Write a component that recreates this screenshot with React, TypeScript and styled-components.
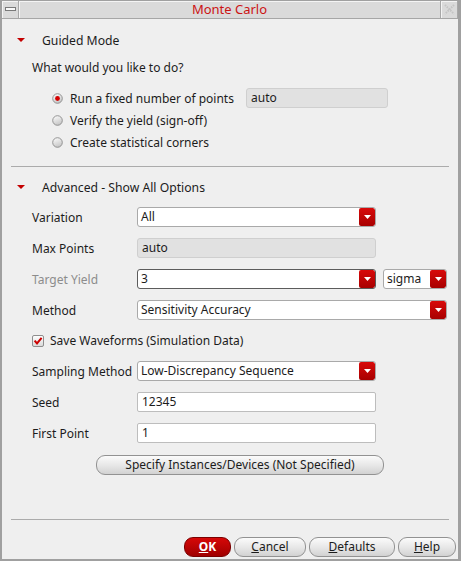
import React from "react";
import styled, { createGlobalStyle } from "styled-components";

const GlobalStyle = createGlobalStyle`
  html, body { margin: 0; padding: 0; }
  body {
    background: #efefef;
    font-family: "Noto Sans", "Open Sans", "DejaVu Sans", sans-serif;
    font-size: 12px;
    color: #1c1c1c;
  }
  * { box-sizing: border-box; }
`;

const Window = styled.div`
  width: 461px;
  height: 561px;
  display: flex;
  flex-direction: column;
  background: #efefef;
  border-style: solid;
  border-color: #a0a0a0;
  border-width: 1px 3px 2px 2px;
`;

const TitleBar = styled.div`
  height: 18px;
  display: flex;
  background: #dadada;
  border-bottom: 1px solid #a6a6a6;
`;

const TitleButton = styled.div`
  width: 17px;
  display: flex;
  align-items: center;
  justify-content: center;
  border-right: 1px solid #a8a8a8;
  box-shadow: inset 1px 1px 0 #f4f4f4;
`;

const TitleText = styled.div`
  flex: 1;
  text-align: center;
  color: #cc1414;
  font-size: 13px;
  line-height: 17px;
  border-right: 1px solid #a8a8a8;
  box-shadow: inset 1px 1px 0 #f4f4f4;
`;

const Body = styled.div`
  flex: 1;
  display: flex;
  flex-direction: column;
`;

const SectionHeader = styled.div<{ $top: number }>`
  display: flex;
  align-items: center;
  height: 20px;
  margin-top: ${(p) => p.$top}px;
  padding-left: 15px;
  font-size: 12.2px;
  svg { margin-right: 17px; }
`;

const Prompt = styled.div`
  margin-top: 8px;
  padding-left: 30px;
  height: 20px;
  line-height: 20px;
`;

const RadioGroup = styled.div`
  margin-top: 9px;
  padding-left: 50px;
  display: grid;
  grid-template-columns: 194px 142px;
  grid-auto-rows: 22px;
  align-items: center;
`;

const RadioOption = styled.div`
  grid-column: 1;
  display: flex;
  align-items: center;
  gap: 7px;
`;

const ReadonlyField = styled.div<{ $width: number }>`
  width: ${(p) => p.$width}px;
  height: 20px;
  line-height: 18px;
  padding-left: 4px;
  background: #e1e1e1;
  border: 1px solid #cfcfcf;
  border-radius: 3px;
`;

const Separator = styled.div<{ $top: number }>`
  height: 1px;
  margin: ${(p) => p.$top}px 9px 0 9px;
  background: #ababab;
`;

const Form = styled.div`
  margin-top: 10px;
  padding: 0 10px 0 30px;
  display: flex;
  flex-direction: column;
  gap: 11px;
`;

const FieldRow = styled.div`
  display: flex;
  align-items: center;
  height: 20px;
`;

const Label = styled.div<{ $disabled?: boolean }>`
  width: 105px;
  color: ${(p) => (p.$disabled ? "#8c8c8c" : "#1c1c1c")};
`;

const Combo = styled.div<{ $width: number; $focused?: boolean; $gap?: number }>`
  width: ${(p) => p.$width}px;
  height: 20px;
  margin-left: ${(p) => p.$gap ?? 0}px;
  display: flex;
  background: #fff;
  border: 1px solid ${(p) => (p.$focused ? "#5c5c5c" : "#a9a9a9")};
  border-radius: 3px;
  overflow: hidden;
`;

const ComboText = styled.div`
  flex: 1;
  padding-left: 3px;
  line-height: 18px;
`;

const ComboArrow = styled.div`
  width: 16px;
  display: flex;
  align-items: center;
  justify-content: center;
  border-radius: 2px;
  background: linear-gradient(#d80a0a, #a80000);
`;

const TextField = styled.div<{ $width: number }>`
  width: ${(p) => p.$width}px;
  height: 20px;
  line-height: 18px;
  padding-left: 4px;
  background: #fff;
  border: 1px solid #bdbdbd;
  border-radius: 2px;
`;

const CheckRow = styled.div`
  display: flex;
  align-items: center;
  height: 19px;
  gap: 6px;
`;

const PushButton = styled.div<{ $width: number; $primary?: boolean }>`
  width: ${(p) => p.$width}px;
  height: 20px;
  line-height: 18px;
  text-align: center;
  border-radius: 9px;
  border: 1px solid ${(p) => (p.$primary ? "#7a0000" : "#929292")};
  background: ${(p) =>
    p.$primary
      ? "linear-gradient(#d60808, #a00000)"
      : "linear-gradient(#fbfbfb, #e6e6e6 55%, #d2d2d2)"};
  color: ${(p) => (p.$primary ? "#fff" : "#1c1c1c")};
  font-weight: ${(p) => (p.$primary ? 700 : 400)};
`;

const WideButton = styled(PushButton)`
  align-self: center;
  margin-top: 1px;
`;

const Footer = styled.div`
  margin-top: auto;
  display: flex;
  flex-direction: column;
`;

const ButtonRow = styled.div`
  margin-top: 17px;
  padding: 0 2px 2px 0;
  display: flex;
  justify-content: flex-end;
  gap: 3px;
`;

const Triangle = () => (
  <svg width="8" height="4" viewBox="0 0 8 4">
    <polygon points="0,0 8,0 4,4" fill="#c40000" />
  </svg>
);

const Arrow = () => (
  <svg width="7" height="4" viewBox="0 0 7 4">
    <polygon points="0,0 7,0 3.5,4" fill="#fff" />
  </svg>
);

const Radio = ({ checked }: { checked?: boolean }) => (
  <svg width="11" height="11" viewBox="0 0 11 11">
    <defs>
      <linearGradient id="rg" x1="0" y1="0" x2="0.4" y2="1">
        <stop offset="0" stopColor="#ffffff" />
        <stop offset="1" stopColor="#c8c8c8" />
      </linearGradient>
    </defs>
    <circle cx="5.5" cy="5.5" r="4.8" fill="url(#rg)" stroke="#8a8a8a" strokeWidth="0.9" />
    {checked && <circle cx="5.5" cy="5.5" r="2.4" fill="#d40000" />}
  </svg>
);

const Checkbox = () => (
  <svg width="12" height="12" viewBox="0 0 12 12">
    <defs>
      <linearGradient id="cg" x1="0" y1="0" x2="0" y2="1">
        <stop offset="0" stopColor="#ffffff" />
        <stop offset="1" stopColor="#d8d8d8" />
      </linearGradient>
    </defs>
    <rect x="0.5" y="0.5" width="11" height="11" rx="1.5" fill="url(#cg)" stroke="#8e8e8e" />
    <path d="M2.6 5.6 L5 8.4 L9.6 2.8" fill="none" stroke="#cc0000" strokeWidth="2" />
  </svg>
);

const MinIcon = () => (
  <svg width="11" height="5" viewBox="0 0 11 5">
    <rect x="0.5" y="0.5" width="10" height="3" fill="#f8f8f8" stroke="#7a7a7a" />
  </svg>
);

const CloseIcon = () => (
  <svg width="11" height="11" viewBox="0 0 11 11">
    <path d="M1 1 L10 10 M10 1 L1 10" stroke="#c4c4c4" strokeWidth="2" strokeDasharray="1.5 1" />
  </svg>
);

export default function App() {
  return (
    <>
      <GlobalStyle />
      <Window>
        <TitleBar>
          <TitleButton>
            <MinIcon />
          </TitleButton>
          <TitleText>Monte Carlo</TitleText>
          <TitleButton>
            <CloseIcon />
          </TitleButton>
        </TitleBar>
        <Body>
          <SectionHeader $top={11}>
            <Triangle />
            Guided Mode
          </SectionHeader>
          <Prompt>What would you like to do?</Prompt>
          <RadioGroup>
            <RadioOption>
              <Radio checked />
              Run a fixed number of points
            </RadioOption>
            <ReadonlyField $width={142}>auto</ReadonlyField>
            <RadioOption>
              <Radio />
              Verify the yield (sign-off)
            </RadioOption>
            <RadioOption>
              <Radio />
              Create statistical corners
            </RadioOption>
          </RadioGroup>
          <Separator $top={13} />
          <SectionHeader $top={10}>
            <Triangle />
            Advanced - Show All Options
          </SectionHeader>
          <Form>
            <FieldRow>
              <Label>Variation</Label>
              <Combo $width={239}>
                <ComboText>All</ComboText>
                <ComboArrow>
                  <Arrow />
                </ComboArrow>
              </Combo>
            </FieldRow>
            <FieldRow>
              <Label>Max Points</Label>
              <ReadonlyField $width={239}>auto</ReadonlyField>
            </FieldRow>
            <FieldRow>
              <Label $disabled>Target Yield</Label>
              <Combo $width={239} $focused>
                <ComboText>3</ComboText>
                <ComboArrow>
                  <Arrow />
                </ComboArrow>
              </Combo>
              <Combo $width={64} $gap={7}>
                <ComboText>sigma</ComboText>
                <ComboArrow>
                  <Arrow />
                </ComboArrow>
              </Combo>
            </FieldRow>
            <FieldRow>
              <Label>Method</Label>
              <Combo $width={310}>
                <ComboText>Sensitivity Accuracy</ComboText>
                <ComboArrow>
                  <Arrow />
                </ComboArrow>
              </Combo>
            </FieldRow>
            <CheckRow>
              <Checkbox />
              Save Waveforms (Simulation Data)
            </CheckRow>
            <FieldRow>
              <Label>Sampling Method</Label>
              <Combo $width={239}>
                <ComboText>Low-Discrepancy Sequence</ComboText>
                <ComboArrow>
                  <Arrow />
                </ComboArrow>
              </Combo>
            </FieldRow>
            <FieldRow>
              <Label>Seed</Label>
              <TextField $width={239}>12345</TextField>
            </FieldRow>
            <FieldRow>
              <Label>First Point</Label>
              <TextField $width={239}>1</TextField>
            </FieldRow>
            <WideButton $width={288}>Specify Instances/Devices (Not Specified)</WideButton>
          </Form>
          <Footer>
            <Separator $top={0} />
            <ButtonRow>
              <PushButton $width={47} $primary>
                <u>O</u>K
              </PushButton>
              <PushButton $width={72}>
                <u>C</u>ancel
              </PushButton>
              <PushButton $width={86}>
                <u>D</u>efaults
              </PushButton>
              <PushButton $width={58}>
                <u>H</u>elp
              </PushButton>
            </ButtonRow>
          </Footer>
        </Body>
      </Window>
    </>
  );
}
